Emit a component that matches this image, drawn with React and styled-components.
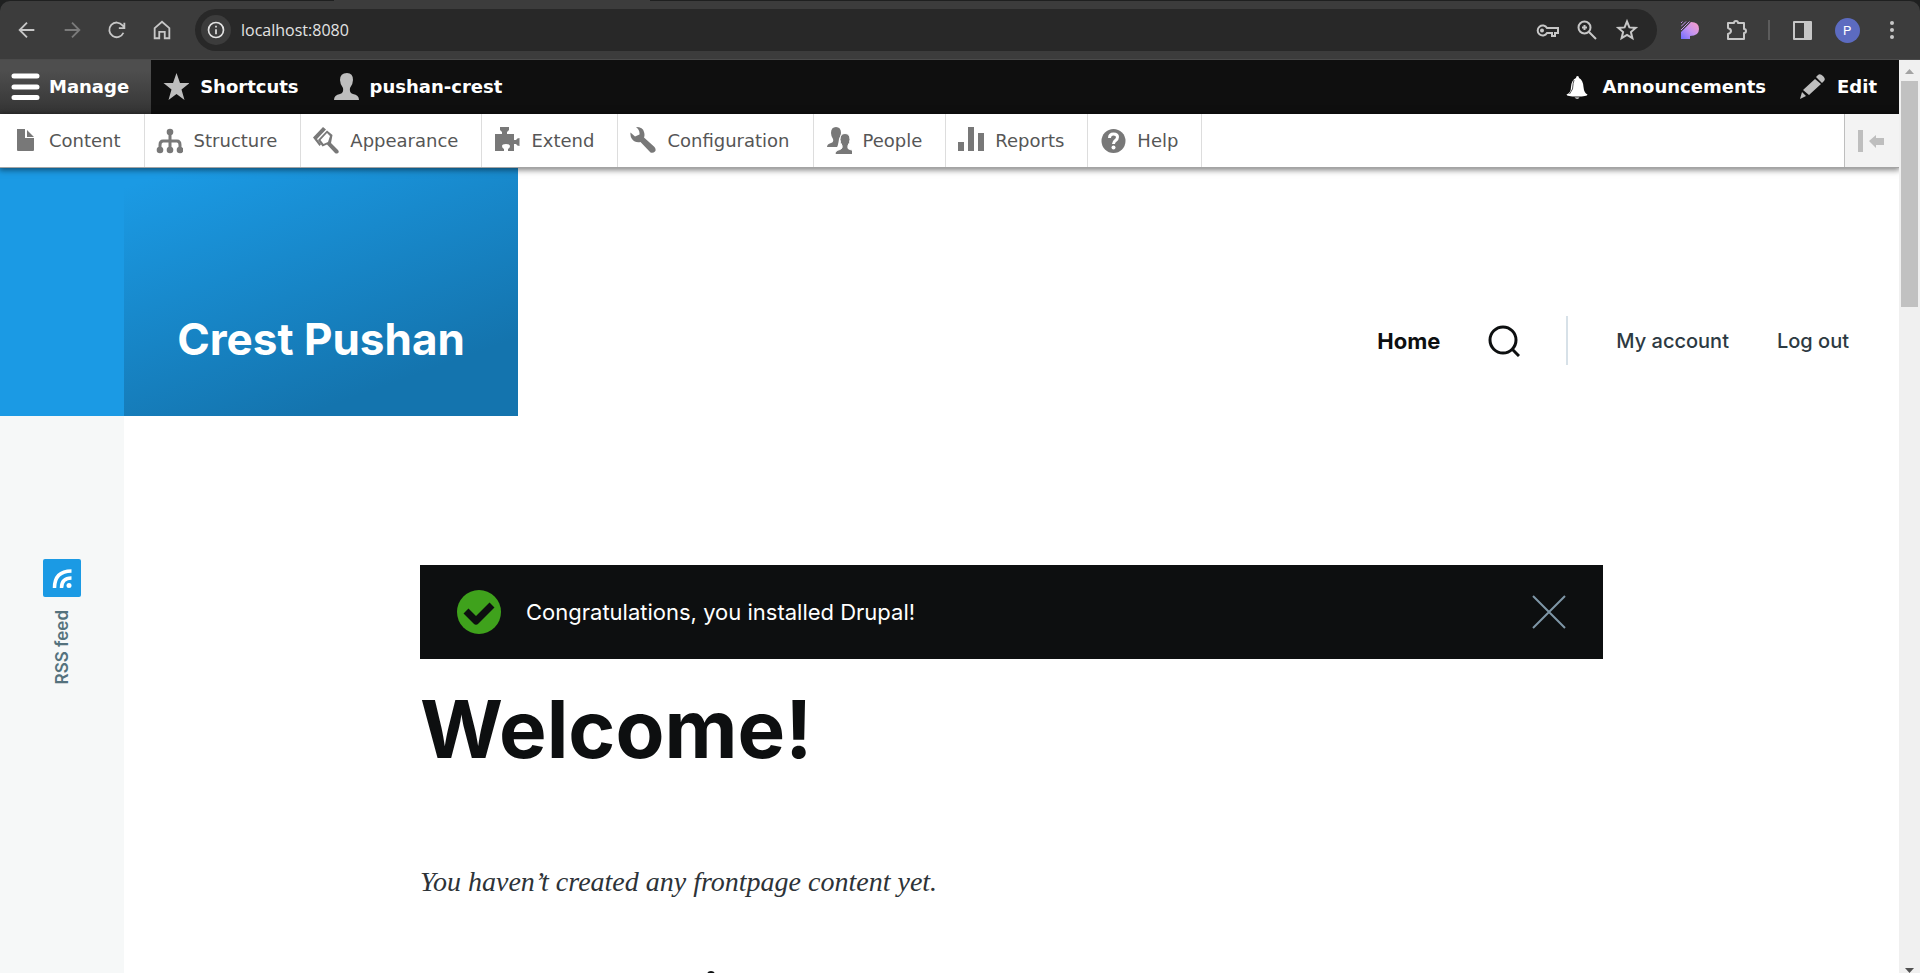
import React from "react";
import styled, { createGlobalStyle, css } from "styled-components";

const Global = createGlobalStyle`
  *, *::before, *::after { box-sizing: border-box; }
  body { margin: 0; background: #fff; font-family: Inter, "Liberation Sans", sans-serif; }
  a { color: inherit; text-decoration: none; }
  button { border: 0; padding: 0; background: none; color: inherit; font: inherit; }
  svg { display: block; flex: none; }
  h1, h2, p { margin: 0; }
`;

const Screen = styled.div`
  height: 100vh;
  display: flex;
  flex-direction: column;
  overflow: hidden;
`;

/* Browser chrome */
const Chrome = styled.header`
  flex: none;
  height: 60px;
  background: #1f2020;
`;
const TabStrip = styled.div`
  height: 1px;
  padding-left: 334px;
`;
const ActiveTab = styled.div`
  width: 316px;
  height: 1px;
  background: #3c3c3c;
`;
const BrowserBar = styled.div`
  height: 59px;
  display: flex;
  align-items: center;
  padding: 0 13px 0 12px;
  background: #3c3c3c;
  border-bottom: 1px solid #4b4b4b;
  border-radius: 10px 10px 0 0;
`;
const BrowserButton = styled.button`
  flex: none;
  width: ${(p) => p.$width || 30}px;
  height: 30px;
  margin-left: ${(p) => p.$gap || 0}px;
  display: flex;
  align-items: center;
  justify-content: center;
  color: ${(p) => (p.$dim ? "#7b7b7b" : "#c7c7c7")};
`;
const Address = styled.div`
  flex: 1;
  min-width: 0;
  height: 42px;
  display: flex;
  align-items: center;
  margin-left: 18px;
  padding: 0 10px 0 6px;
  border-radius: 21px;
  background: #282828;
`;
const InfoButton = styled.button`
  flex: none;
  width: 30px;
  height: 30px;
  display: flex;
  align-items: center;
  justify-content: center;
  border-radius: 50%;
  background: #3c3c3c;
  color: #e3e3e3;
`;
const Url = styled.input`
  flex: 1;
  min-width: 0;
  border: 0;
  outline: 0;
  padding: 0 0 0 10px;
  background: none;
  color: #e3e3e3;
  font: 16px/24px "Open Sans", sans-serif;
`;
const BarRule = styled.span`
  flex: none;
  width: 2px;
  height: 20px;
  margin-left: 17px;
  background: #5c5c5c;
`;
const Avatar = styled.span`
  width: 25px;
  height: 25px;
  border-radius: 50%;
  background: #5c6bc0;
  color: #fff;
  font: 13px/25px Roboto, sans-serif;
  text-align: center;
`;

/* Viewport and scrollbar */
const Viewport = styled.div`
  flex: 1;
  min-height: 0;
  display: flex;
`;
const Page = styled.div`
  flex: 1;
  min-width: 0;
  display: flex;
  flex-direction: column;
  overflow: hidden;
`;
const Scrollbar = styled.div`
  flex: none;
  width: 21px;
  display: flex;
  flex-direction: column;
  align-items: center;
  padding-top: 9px;
  background: #f0f0f0;
`;
const Thumb = styled.div`
  width: 17px;
  height: 226px;
  margin: 7px 0 auto;
  background: #c1c1c1;
`;

/* Admin toolbar */
const AdminBar = styled.nav`
  flex: none;
  height: 54px;
  display: flex;
  background: #0f0f0f;
  color: #fff;
  font: bold 18px/54px "DejaVu Sans", sans-serif;
`;
const Item = styled.a`
  flex: none;
  display: flex;
  align-items: center;
  padding: 0 22px 0 10px;
  white-space: nowrap;
  ${(p) => p.$push && css`margin-left: auto;`}
  ${(p) => p.$active && css`background: linear-gradient(#4e4e4e 20%, #343434);`}
`;
const IconSlot = styled.span`
  flex: none;
  width: 39px;
  color: ${(p) => p.$color || "#bebebe"};
`;
const Tray = styled.nav`
  position: relative;
  flex: none;
  height: 54px;
  display: flex;
  background: #fff;
  border-bottom: 1px solid #a4a4a4;
  box-shadow: 0 1px 6px 1px rgba(0, 0, 0, 0.5);
  color: #565656;
  font: 18px/53px "DejaVu Sans", sans-serif;
`;
const TrayItem = styled(Item)`
  padding-right: 23px;
  border-right: 1px solid #ddd;
`;
const TrayToggle = styled.button`
  width: 55px;
  margin-left: auto;
  display: flex;
  align-items: center;
  justify-content: center;
  border-left: 1px solid #bebebe;
  background: #f3f3f3;
  color: #bebebe;
`;

/* Site */
const SiteHeader = styled.header`
  flex: none;
  height: 248px;
  display: flex;
`;
const HeaderEdge = styled.div`
  flex: none;
  width: 124px;
  background: #1b9ae4;
`;
const Branding = styled.div`
  flex: none;
  width: 394px;
  display: flex;
  align-items: flex-end;
  justify-content: center;
  padding-bottom: 48px;
  background: linear-gradient(160deg, #1b9ae4 5%, #1474ae 80%);
  color: #fff;
  font-size: 44px;
  line-height: 58px;
  font-weight: 700;
  white-space: nowrap;
`;
const SiteNav = styled.nav`
  flex: 1;
  display: flex;
  align-items: center;
  justify-content: flex-end;
  padding: 97px 50px 0 0;
  color: #2d3a42;
  font-size: 20px;
  line-height: 50px;
  font-weight: 500;
  white-space: nowrap;
`;
const HomeLink = styled.a`
  color: #0d0f10;
  font-size: 22px;
  font-weight: 700;
`;
const SearchButton = styled.button`
  margin-left: 48px;
  color: #0d0f10;
`;
const NavRule = styled.span`
  width: 2px;
  height: 49px;
  margin-left: 46px;
  background: #d7e1e8;
`;
const AccountLink = styled.a`
  margin-left: 48px;
`;
const Body = styled.div`
  flex: 1;
  min-height: 0;
  display: flex;
`;
const Side = styled.aside`
  flex: none;
  width: 124px;
  padding-top: 143px;
  background: #f6f8f8;
`;
const Feed = styled.a`
  display: flex;
  flex-direction: column;
  align-items: center;
  gap: 13px;
  color: #54727d;
  font-size: 17px;
  line-height: 20px;
  font-weight: 600;
`;
const FeedLabel = styled.span`
  writing-mode: vertical-rl;
  transform: rotate(180deg);
`;
const Main = styled.main`
  flex: 1;
  min-width: 0;
  padding: 149px 32px 0;
`;
const Column = styled.div`
  max-width: 1183px;
  margin: 0 auto;
`;
const Message = styled.div`
  height: 94px;
  display: flex;
  align-items: center;
  padding: 0 37px;
  background: #0d0f10;
  color: #fff;
  font-size: 22px;
  line-height: 32px;
`;
const MessageText = styled.p`
  flex: 1;
  padding-left: 25px;
`;
const CloseButton = styled.button`
  color: #7e96a7;
`;
const Title = styled.h1`
  padding-top: 22px;
  color: #0d0f10;
  font-size: 80px;
  line-height: 96px;
  font-weight: 700;
`;
const Empty = styled.p`
  padding-top: 85px;
  color: #2d3338;
  font: italic 28px/40px "Liberation Serif", serif;
`;
const NextHeading = styled.div`
  width: 8px;
  height: 8px;
  margin: 69px 0 0 287px;
  border-radius: 50%;
  background: #0d0f10;
`;

const Line = ({ size = 24, width = 2, box = 24, children }) => (
  <svg width={size} height={size} viewBox={`0 0 ${box} ${box}`} fill="none" stroke="currentColor" strokeWidth={width} aria-hidden="true">
    {children}
  </svg>
);
const Solid = ({ w = 28, h = 28, children }) => (
  <svg width={w} height={h} viewBox={`0 0 ${w} ${h}`} fill="currentColor" aria-hidden="true">
    {children}
  </svg>
);

const trayItems = [
  ["Content", <Solid><path d="M7 2h8v9h9v12a1 1 0 0 1-1 1H8a1 1 0 0 1-1-1zM17 3l7 7h-7z" /></Solid>],
  ["Structure", <Solid><circle cx="15" cy="5" r="3.3" /><circle cx="5" cy="23" r="3.3" /><circle cx="15" cy="23" r="3.3" /><circle cx="25" cy="23" r="3.3" /><path d="M5 22v-4q0-4 3-4h14q3 0 3 4v4M15 6v16" fill="none" stroke="currentColor" strokeWidth="3" /></Solid>],
  ["Appearance", <Solid><path d="M2 10.500L12 0l3 2.500L6 12l4 5.500-1.500 1.500zM16 3.500l5.500 4.500-1.500 8 7 7q1.500 2 0 3t-3 0l-8-8.500-4.500 2L7 13zM16 6l-6.500 7 3 4 4.500-2 2-6z" fillRule="evenodd" /></Solid>],
  ["Extend", <Solid><path d="M3 7h7V5L8 3V0h9v3l-2 2v2h7v6h2q1-2 3.500-2v8Q25 19 24 17h-2v7h-6v-2q2-1 2-3t-4-2-4 2 2 3v2H3z" /></Solid>],
  ["Configuration", <Solid><path d="M8 0q7 0 8 5 1 3 0 5.500L26.500 20q2 3 .5 4.500-2 2-4.500 1L12.500 15Q7 16 4 12 2 9 2.500 5.500L7 9.500l4.500-2Q12 3 8 0z" /></Solid>],
  ["People", <Solid><path d="M12 0q5 0 5 6 0 2-2 6-1 7-2 8H3q0-3 4-4 3-1 2-4-2-3-2-6 0-6 5-6z" /><path d="M21 6.500q5 0 5 6 0 3-2 6-1 4 2 4 5 1 5 5H11q0-4 5-5 3-1 2-4-2-3-2-6 0-6 5-6z" stroke="#fff" /></Solid>],
  ["Reports", <Solid><path d="M2 15h6v9H2zM12 0h6v24h-6zM22 6h6v18h-6z" /></Solid>],
  ["Help", <Solid><circle cx="15.500" cy="14" r="12" /><path d="M11.500 11q0-4 4-4t4 3q0 2-2 3.500t-2 3.500" fill="none" stroke="#fff" strokeWidth="3" /><circle cx="15.500" cy="20.500" r="2" fill="#fff" /></Solid>],
];

export default function App() {
  return (
    <Screen>
      <Global />
      <Chrome>
        <TabStrip><ActiveTab /></TabStrip>
        <BrowserBar>
          <BrowserButton aria-label="Back"><Line size={22}><path d="M20 12H5M12 4l-8 8 8 8" /></Line></BrowserButton>
          <BrowserButton $gap={15} $dim aria-label="Forward"><Line size={22}><path d="M4 12h15M12 4l8 8-8 8" /></Line></BrowserButton>
          <BrowserButton $gap={15} aria-label="Reload"><Line size={22}><path d="M19 15a8 8 0 1 1-1-8l2 2M20 4v6h-6" /></Line></BrowserButton>
          <BrowserButton $gap={15} aria-label="Home page"><Line size={22}><path d="M4 10l8-7 8 7v11h-5v-7H9v7H4z" /></Line></BrowserButton>
          <Address>
            <InfoButton aria-label="Site information"><Line size={20}><circle cx="12" cy="12" r="9" /><path d="M12 11v6M12 7v2" /></Line></InfoButton>
            <Url aria-label="Address" defaultValue="localhost:8080" />
            <BrowserButton $width={40} aria-label="Passwords"><Line size={24}><path d="M12 10a5 5 0 1 0 0 5h5v3h3v-3h3v-5z" /><circle cx="7" cy="12.500" r="1" /></Line></BrowserButton>
            <BrowserButton $width={40} aria-label="Zoom"><Line size={24}><circle cx="9.500" cy="9.500" r="6" /><path d="M14 14l7 7M9.500 7v5M7 9.500h5" /></Line></BrowserButton>
            <BrowserButton $width={40} aria-label="Bookmark"><Line size={24}><path d="M12 3.500l2.400 5.900 6.300.5-4.800 4.100 1.500 6.200-5.400-3.300-5.400 3.300 1.500-6.200-4.800-4.100 6.300-.5z" /></Line></BrowserButton>
          </Address>
          <BrowserButton $gap={18} aria-label="Extension">
            <svg width="18" height="18" viewBox="0 0 18 18" aria-hidden="true">
              <defs><linearGradient id="ext" x1="0" y1="1" x2="1" y2="0"><stop offset="0" stopColor="#6f6bff" /><stop offset=".5" stopColor="#c695ef" /><stop offset="1" stopColor="#ff9ec4" /></linearGradient></defs>
              <path d="M0 11L10 1q8 0 8 7 0 7-9 7v3H0z" fill="url(#ext)" />
              <path d="M0 2l1.500-1.500M0 5.500L5 .5M0 9L8.500.5" stroke="#c695ef" />
            </svg>
          </BrowserButton>
          <BrowserButton $gap={16} aria-label="Extensions"><Line size={24}><path d="M4 5h6q0-2 2-2t2 2h6v6q2 0 2 2t-2 2v6H4v-5q3-1 3-3t-3-3z" strokeLinejoin="round" /></Line></BrowserButton>
          <BarRule />
          <BrowserButton $gap={17} aria-label="Side panel"><Line size={24}><path d="M4 4h17v17H4z" strokeLinejoin="round" /><path d="M14 4h7v17h-7z" fill="currentColor" stroke="none" /></Line></BrowserButton>
          <BrowserButton $gap={15} aria-label="Profile"><Avatar>P</Avatar></BrowserButton>
          <BrowserButton $gap={15} aria-label="Menu"><Solid w={4} h={18}><circle cx="2" cy="2" r="2" /><circle cx="2" cy="9" r="2" /><circle cx="2" cy="16" r="2" /></Solid></BrowserButton>
        </BrowserBar>
      </Chrome>
      <Viewport>
        <Page>
          <AdminBar aria-label="Administration">
            <Item href="#manage" $active><IconSlot $color="#fff"><Solid w={30}><path d="M4 .5h23a2.500 2.500 0 0 1 0 5H4a2.500 2.500 0 0 1 0-5zM4 11.500h23a2.500 2.500 0 0 1 0 5H4a2.500 2.500 0 0 1 0-5zM4 22h23a2.500 2.500 0 0 1 0 5H4a2.500 2.500 0 0 1 0-5z" /></Solid></IconSlot>Manage</Item>
            <Item href="#shortcuts"><IconSlot><Solid><path d="M15.500 0l3.500 10h9.500l-8 6.500 3 10.500-8-6-8 6 3-10.500-8-6.500H12z" /></Solid></IconSlot>Shortcuts</Item>
            <Item href="#user"><IconSlot><Solid><path d="M16 0q6 0 6 7 0 4-3 8-1 5 3 6 6 1 6 6H3q0-5 6-6 4-1 3-6-3-4-3-8 0-7 7-7z" /></Solid></IconSlot>pushan-crest</Item>
            <Item href="#announcements" $push><IconSlot $color="#fff"><Solid><path d="M12 5q0-2 1.500-2T15 5q4 2 4.500 9 .5 6 4 7.500 0 2-10.500 2T2.500 21.500Q7 20 7 14q.5-7 5-9zM10.500 24.500h5q-2 2.500-5 0z" /><path d="M10 7q-1 3-1.500 9l-3 5" fill="none" stroke="#555" /></Solid></IconSlot>Announcements</Item>
            <Item href="#edit"><IconSlot><Solid><path d="M20 2q2-2 5 1t1 5l-2 2-6-6zM17 6l6 5L11 22l-6-5zM4 19l4 4-6 3z" /></Solid></IconSlot>Edit</Item>
          </AdminBar>
          <Tray aria-label="Administration menu">
            {trayItems.map(([label, icon]) => (
              <TrayItem href={`#${label.toLowerCase()}`} key={label}><IconSlot $color="#787878">{icon}</IconSlot>{label}</TrayItem>
            ))}
            <TrayToggle aria-label="Vertical orientation"><Solid w={28} h={22}><path d="M0 0h5v22H0zM11 11l7-6v3h8v7h-8v3z" /></Solid></TrayToggle>
          </Tray>
          <SiteHeader>
            <HeaderEdge />
            <Branding><a href="#front">Crest Pushan</a></Branding>
            <SiteNav aria-label="Main navigation">
              <HomeLink href="#home">Home</HomeLink>
              <SearchButton aria-label="Search"><Line size={32} width={3} box={32}><circle cx="15" cy="15" r="13" /><path d="M24 24l7 7" /></Line></SearchButton>
              <NavRule />
              <AccountLink href="#account">My account</AccountLink>
              <AccountLink href="#logout">Log out</AccountLink>
            </SiteNav>
          </SiteHeader>
          <Body>
            <Side>
              <Feed href="#rss">
                <svg width="38" height="38" viewBox="0 0 38 38" fill="none" aria-hidden="true">
                  <rect width="38" height="38" rx="2" fill="#1b9ae4" />
                  <path d="M11.500 29q0-17 17-17M18.500 29q0-10 10-10" stroke="#fff" strokeWidth="3.500" />
                  <circle cx="26" cy="26.500" r="2.500" fill="#fff" />
                </svg>
                <FeedLabel>RSS feed</FeedLabel>
              </Feed>
            </Side>
            <Main>
              <Column>
                <Message role="status">
                  <svg width="44" height="44" viewBox="0 0 44 44" aria-hidden="true">
                    <circle cx="22" cy="22" r="22" fill="#3fa21c" />
                    <path d="M9 21l10 10 16-16" fill="none" stroke="#0d0f10" strokeWidth="7" strokeLinejoin="round" />
                  </svg>
                  <MessageText>Congratulations, you installed Drupal!</MessageText>
                  <CloseButton aria-label="Close message"><Line size={34} width={2} box={34}><path d="M1 1l32 32M33 1L1 33" /></Line></CloseButton>
                </Message>
                <Title>Welcome!</Title>
                <Empty>You haven’t created any frontpage content yet.</Empty>
                <NextHeading />
              </Column>
            </Main>
          </Body>
        </Page>
        <Scrollbar aria-hidden="true">
          <svg width="9" height="5" viewBox="0 0 9 5"><path d="M0 5L4.500 0 9 5z" fill="#a3a3a3" /></svg>
          <Thumb />
          <svg width="9" height="5" viewBox="0 0 9 5"><path d="M0 0h9L4.500 5z" fill="#505050" /></svg>
        </Scrollbar>
      </Viewport>
    </Screen>
  );
}
